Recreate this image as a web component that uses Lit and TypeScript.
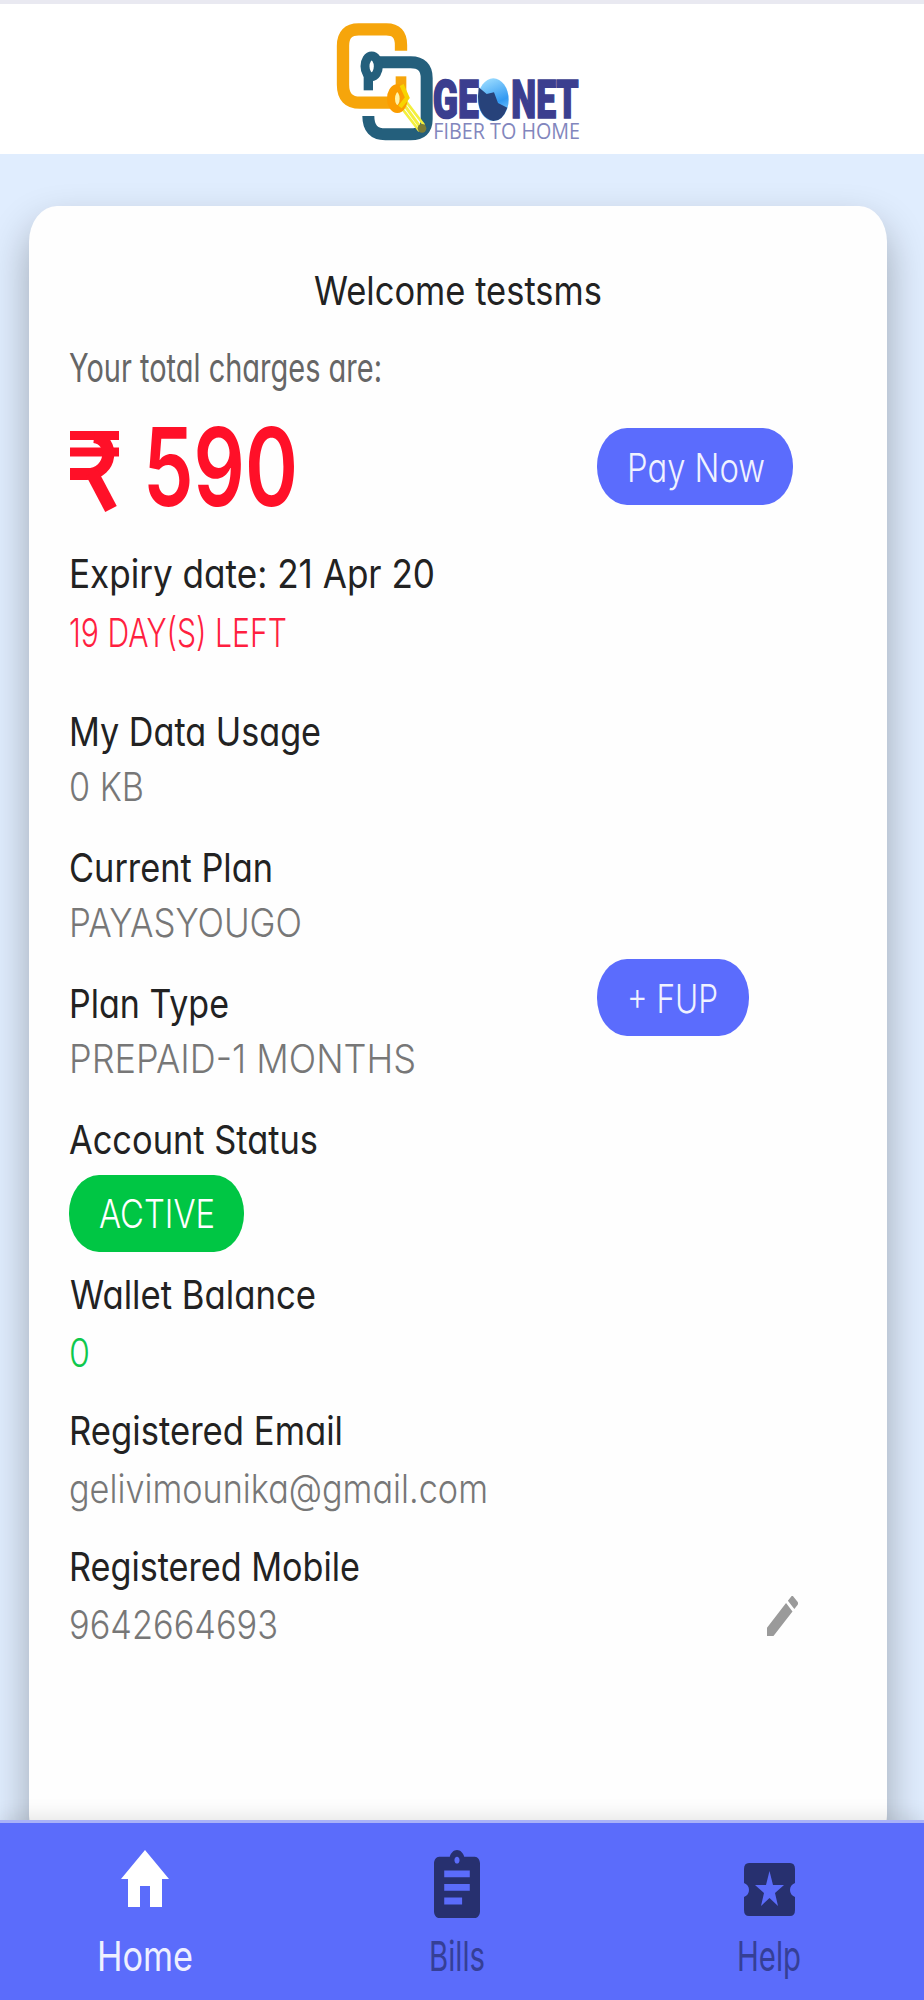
import { LitElement, html, svg, css } from "lit";
import { customElement, property } from "lit/decorators.js";

/** One line of text drawn to an exact advance width, with its baseline 31px below the top. */
@customElement("fit-line")
class FitLine extends LitElement {
  @property() text = "";
  @property({ type: Number }) width = 100;
  @property({ type: Number }) inset = 1;
  static styles = css`
    :host { display: block; }
    svg { display: block; overflow: visible; }
    text {
      fill: currentColor;
      font-family: Inter, "Open Sans", sans-serif;
      font-feature-settings: "cv11" 1;
    }
  `;
  render() {
    return html`<svg width=${this.width} height="40" role="img" aria-label=${this.text}>
      ${svg`<text x=${-this.inset} y="31" textLength=${this.width + this.inset * 2}
        lengthAdjust="spacingAndGlyphs">${this.text}</text>`}
    </svg>`;
  }
}

@customElement("brand-logo")
class BrandLogo extends LitElement {
  static styles = css`
    :host { display: block; }
    svg { display: block; overflow: visible; }
    .name { font: 900 160px Roboto, sans-serif; fill: #3b3e8f; stroke: #3b3e8f; stroke-width: 5; }
    .tag { font: 400 64px "Open Sans", sans-serif; fill: #8286bd; }
  `;
  render() {
    return html`<svg width="280" height="150" viewBox="0 12 840 450">
      <defs>
        <linearGradient id="sky" x1="0.3" y1="0" x2="0.6" y2="1">
          <stop offset="0" stop-color="#9bdcff"></stop>
          <stop offset="0.6" stop-color="#3199f2"></stop>
          <stop offset="1" stop-color="#8fd4ff"></stop>
        </linearGradient>
      </defs>
      <g fill="none" transform="translate(0 -6)">
        <path d="M243 158V141Q243 94 199 94H116Q69 94 69 143V260Q69 314 120 314H212" stroke="#f6a50b" stroke-width="37"/>
        <path d="M165 193H272Q320 193 320 240V364Q320 409 272 409H196Q145 409 145 354" stroke="#245f7c" stroke-width="36"/>
        <path d="M145 277V219" stroke="#245f7c" stroke-width="28"/>
        <ellipse cx="155" cy="205" rx="20" ry="31" fill="#fff" stroke="#245f7c" stroke-width="27"/>
        <path d="M243 235V279" stroke="#f6a50b" stroke-width="32"/>
        <path d="M244 271V309L308 397" stroke="#f3ef3d" stroke-width="9"/>
        <path d="M254 305L312 381M238 321L298 399" stroke="#f3ef3d" stroke-width="8"/>
        <ellipse cx="232" cy="302" rx="19" ry="31" fill="#fff3a8" stroke="#fb9d00" stroke-width="24"/>
        <path d="M245 261L262 299L240 327" stroke="#f7d400" stroke-width="13"/>
        <circle cx="306" cy="391" r="13" fill="#7d7c35"/>
      </g>
      <ellipse cx="520" cy="299" rx="46" ry="64" fill="url(#sky)"/>
      <path d="M476 262L500 282L522 277L534 309L562 323Q548 363 520 363Q476 353 474 290Z" fill="#27427a"/>
      <text class="name" x="338" y="354" textLength="138" lengthAdjust="spacingAndGlyphs">GE</text>
      <text class="name" x="574" y="354" textLength="202" lengthAdjust="spacingAndGlyphs">NET</text>
      <text class="tag" x="340" y="416" textLength="440" lengthAdjust="spacingAndGlyphs">FIBER TO HOME</text>
    </svg>`;
  }
}

interface Field { label: string; lw: number; value: string; vw: number; loose?: boolean; }

const PLAN_FIELDS: Field[] = [
  { label: "My Data Usage", lw: 250, value: "0 KB", vw: 73 },
  { label: "Current Plan", lw: 202, value: "PAYASYOUGO", vw: 231 },
  { label: "Plan Type", lw: 158, value: "PREPAID-1 MONTHS", vw: 345 },
];

@customElement("app-root")
class AppRoot extends LitElement {
  static styles = css`
    :host {
      display: flex; flex-direction: column; width: 100%; height: 2000px;
      overflow: hidden; background: #e0edfe; color: #222;
      font: 400 39.5px Inter, sans-serif;
    }
    header {
      box-sizing: border-box; height: 154px; flex: none; background: #fff;
      border-top: 4px solid #e9e9f1; padding-left: 320px;
    }
    main {
      height: 1666px; flex: none; box-sizing: border-box; overflow: hidden;
      padding: 52px 37px 0 28.5px;
    }
    .card {
      box-sizing: border-box; height: 1644px; background: #fefefe;
      border-radius: 28px / 36px; padding: 68px 0 0 41.5px;
      box-shadow: 0 20px 40px rgba(0, 0, 0, .3);
    }
    .welcome { margin-left: 245px; }
    .charges { margin-top: 37px; color: #666; }
    .amount-row { display: grid; grid-template-columns: 527px auto; height: 79px; margin-top: 36px; justify-content: start; }
    .amount { display: flex; color: #ff1028; }
    .amount svg { display: block; overflow: visible; }
    .amount text { fill: currentColor; font-family: Inter, sans-serif; font-weight: 600; }
    .pill {
      box-sizing: border-box; height: 77px; border-radius: 30px / 38px;
      margin-top: 1px; padding: 23px 0 0 31px; color: #f0f2ff; background: #5b6cfd; font-weight: 300;
    }
    .pay { width: 196px; }
    .fup { width: 152px; margin-top: -28px; }
    .active { width: 175px; background: #00c644; color: #fff; margin: 12px 0 0 -1px; padding-top: 22px; }
    .expiry { margin-top: 51px; }
    .left { margin-top: 19px; color: #ff1f40; font-weight: 350; }
    .fields { margin-top: 59px; }
    .field { height: 136px; }
    .value { margin-top: 15px; color: #777; font-weight: 300; }
    .loose .value { margin-top: 18.5px; }
    .green { color: #0fc84d !important; font-weight: 350; }
    .split { display: grid; grid-template-columns: 527px auto; justify-content: start; }
    .status { height: 154.5px; }
    .mobile { display: grid; grid-template-columns: 697px auto; justify-content: start; align-items: start; }
    .mobile .edit { margin-top: 46px; display: block; }
    nav {
      box-sizing: border-box; position: relative; height: 180px; flex: none;
      background: #5b6cfb; border-top: 3px solid #a9b2f8; padding-right: 10px;
      display: grid; grid-template-columns: 290px 334px 290px;
      box-shadow: 0 -4px 18px rgba(0, 0, 0, .1);
    }
    .tab { display: flex; flex-direction: column; align-items: center; padding-top: 27px; color: #353f96; font-weight: 400; font-size: 41px; }
    .tab.on { color: #eef0ff; }
    .tab svg { display: block; height: 68px; }
    .tab fit-line { margin-top: 22px; }
  `;

  private line(text: string, width: number, inset = 1, cls = "") {
    return html`<fit-line class=${cls} .text=${text} .width=${width} .inset=${inset}></fit-line>`;
  }

  private field(f: Field) {
    return html`<div class="field ${f.loose ? "loose" : ""}">
      ${this.line(f.label, f.lw)}
      ${this.line(f.value, f.vw, 1, "value")}
    </div>`;
  }

  render() {
    const [usage, plan, type] = PLAN_FIELDS;
    return html`
      <header><brand-logo></brand-logo></header>
      <main>
        <section class="card">
          ${this.line("Welcome testsms", 286, 1, "welcome")}
          ${this.line("Your total charges are:", 311, 1, "charges")}
          <div class="amount-row">
            <div class="amount">
              <svg width="78" height="79">
                <g fill="none" stroke="currentColor">
                  <path d="M0 8.500H49" stroke-width="9"/>
                  <path d="M0 25H49" stroke-width="9"/>
                  <path d="M24 10C45 12 43 47 17 47H0" stroke-width="12"/>
                  <path d="M22 46L41 82" stroke-width="13"/>
                </g>
              </svg>
              <svg width="146" height="79">
                <text x="-5" y="79" font-size="108" textLength="155" lengthAdjust="spacingAndGlyphs">590</text>
              </svg>
            </div>
            <div class="pill pay">${this.line("Pay Now", 136)}</div>
          </div>
          ${this.line("Expiry date: 21 Apr 20", 364, 1, "expiry")}
          ${this.line("19 DAY(S) LEFT", 216, 1, "left")}
          <div class="fields">
            ${this.field(usage)}
            ${this.field(plan)}
            <div class="split">
              ${this.field(type)}
              <div class="pill fup">${this.line("+ FUP", 89)}</div>
            </div>
            <div class="status">
              ${this.line("Account Status", 247, 1)}
              <div class="pill active">${this.line("ACTIVE", 114)}</div>
            </div>
            <div class="field loose">
              ${this.line("Wallet Balance", 246, 0)}
              ${this.line("0", 19, 1, "value green")}
            </div>
            ${this.field({ label: "Registered Email", lw: 272, value: "gelivimounika@gmail.com", vw: 417, loose: true })}
            <div class="mobile">
              ${this.field({ label: "Registered Mobile", lw: 289, value: "9642664693", vw: 207, loose: true })}
              <svg class="edit" width="31" height="40" viewBox="3 3 18 18" preserveAspectRatio="none" fill="#9a9a9a">
                <path d="M3 17.25V21h3.75L17.81 9.94l-3.75-3.75L3 17.25zM20.71 7.04a1 1 0 0 0 0-1.41l-2.34-2.34a1 1 0 0 0-1.41 0l-1.83 1.83 3.75 3.75 1.83-1.83z"/>
              </svg>
            </div>
          </div>
        </section>
      </main>
      <nav>
        <div class="tab on">
          <svg width="50" viewBox="0 0 50 68" fill="#fff">
            <path d="M25 0L49 29H42V57H30V36H20V57H8V29H1Z"/>
          </svg>
          ${this.line("Home", 94)}
        </div>
        <div class="tab">
          <svg width="46" viewBox="3 1 18 20" preserveAspectRatio="none" fill="#27306f">
            <path d="M19 3h-4.180C14.400 1.840 13.300 1 12 1c-1.300 0-2.400.840-2.820 2H5c-1.100 0-2 .900-2 2v14c0 1.100.900 2 2 2h14c1.100 0 2-.900 2-2V5c0-1.100-.900-2-2-2zm-7 0c.550 0 1 .450 1 1s-.450 1-1 1-1-.450-1-1 .450-1 1-1zm2 14H7v-2h7v2zm3-4H7v-2h10v2zm0-4H7V7h10v2z"/>
          </svg>
          ${this.line("Bills", 54)}
        </div>
        <div class="tab">
          <svg width="51" viewBox="0 0 51 68" fill="#27306f">
            <path fill-rule="evenodd" d="M5 13H46Q51 13 51 19V33Q46 35 46 40Q46 45 51 47V60Q51 66 46 66H5Q0 66 0 60V47Q5 45 5 40Q5 35 0 33V19Q0 13 5 13ZM25.500 21L22 35H11L20 43L17 56L25.500 48L34 56L31 43L40 35H29Z"/>
          </svg>
          ${this.line("Help", 62)}
        </div>
      </nav>
    `;
  }
}
